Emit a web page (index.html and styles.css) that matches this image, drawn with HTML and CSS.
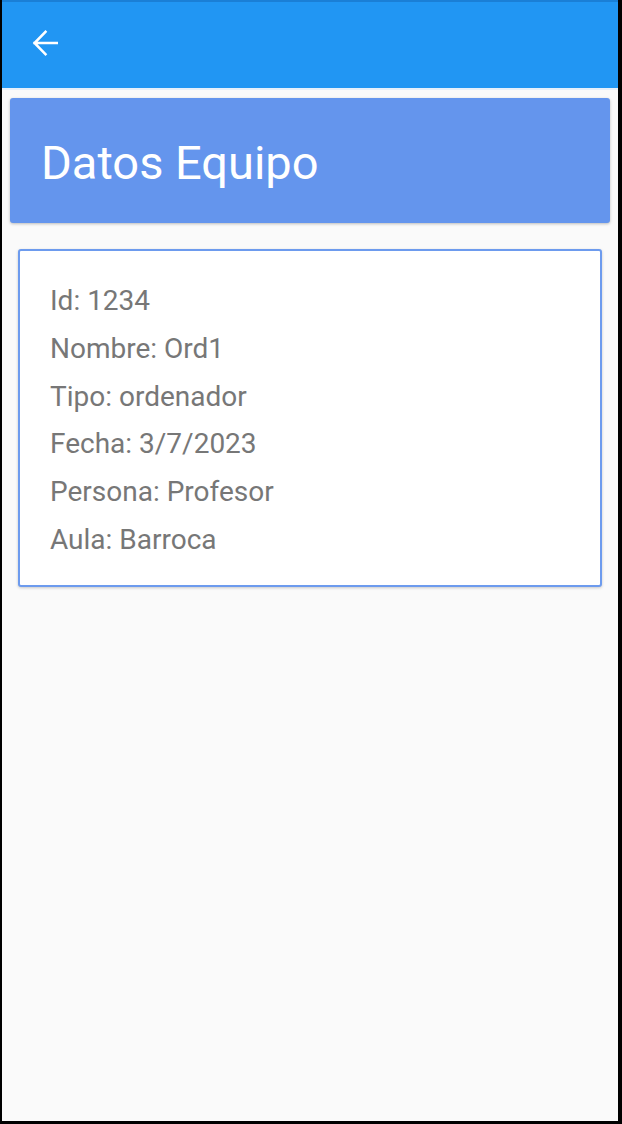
FILE: index.html
```html
<!DOCTYPE html>
<html lang="es">
<head>
<meta charset="utf-8">
<title>Datos Equipo</title>
<link rel="stylesheet" href="styles.css">
</head>
<body>
<div class="screen">
  <header class="appbar">
    <button class="back" aria-label="Atrás">
      <svg width="26" height="26" viewBox="0 0 26 26" aria-hidden="true">
        <path d="M25 13H2.5 M13.5 1.8L2.5 13L13.5 24.2" fill="none" stroke="#fff" stroke-width="2.5" stroke-linecap="square"/>
      </svg>
    </button>
  </header>
  <div class="divider"></div>
  <main class="content">
    <section class="title-card">
      <h1 class="title">Datos Equipo</h1>
    </section>
    <section class="info-card">
      <p class="row">Id: 1234</p>
      <p class="row">Nombre: Ord1</p>
      <p class="row">Tipo: ordenador</p>
      <p class="row">Fecha: 3/7/2023</p>
      <p class="row">Persona: Profesor</p>
      <p class="row">Aula: Barroca</p>
    </section>
  </main>
</div>
</body>
</html>
```

FILE: styles.css
```css
html, body {
  margin: 0;
  padding: 0;
  background: #000;
}
body {
  width: 622px;
  height: 1124px;
  overflow: hidden;
  font-family: Roboto, "Liberation Sans", sans-serif;
}
.screen {
  margin: 0 4px 0 2px;
  height: 1121px;
  background: #fafafa;
  display: flex;
  flex-direction: column;
}
.appbar {
  height: 86px;
  background: #2196f3;
  border-top: 2px solid #1a7fd6;
  display: flex;
  align-items: center;
  padding-left: 30px;
}
.back {
  background: none;
  border: 0;
  padding: 0;
  width: 26px;
  height: 26px;
  display: flex;
  margin-top: -4px;
}
.divider {
  height: 2px;
  background: #e6f0fb;
}
.content {
  display: flex;
  flex-direction: column;
  padding: 8px 8px 0 8px;
}
.title-card {
  height: 125px;
  background: #6495ed;
  border-radius: 3px;
  box-shadow: 0 1px 3px rgba(0,0,0,0.25);
  display: flex;
  align-items: center;
  padding-left: 31px;
}
.title {
  margin: 4px 0 0 0;
  color: #fff;
  font-weight: 400;
  font-size: 47px;
  line-height: 1;
}
.info-card {
  margin: 26px 8px 0 8px;
  background: #fff;
  border: 2px solid #6d9bee;
  border-radius: 3px;
  box-shadow: 0 1px 3px rgba(0,0,0,0.2);
  padding: 26px 30px 21px 30px;
  display: flex;
  flex-direction: column;
}
.row {
  margin: 0;
  color: #777;
  font-size: 28px;
  line-height: 47.8px;
}
```
